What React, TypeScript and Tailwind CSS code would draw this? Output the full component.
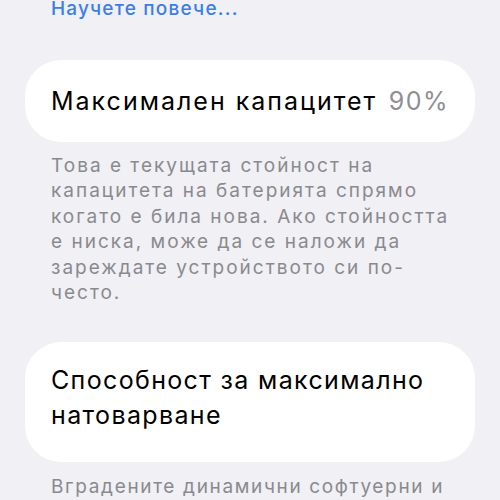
import React from "react";

export default function App() {
  return (
    <div
      lang="bg"
      className="w-[500px] h-[500px] overflow-hidden bg-[#f0f0f5] font-['Inter','Noto_Sans',sans-serif] antialiased"
    >
      <div className="-mt-[3px] pl-[51px] text-[19px] leading-[24px] font-medium tracking-[1.2px] text-[#3b7fe3] whitespace-nowrap">
        Научете повече...
      </div>

      <div className="mt-[39px] mx-[25px] h-[82px] rounded-[36px] bg-white flex items-center justify-between pl-[26px] pr-[26px]">
        <span className="text-[25px] leading-[30px] tracking-[2px] text-black whitespace-nowrap">
          Максимален капацитет
        </span>
        <span className="text-[25px] leading-[30px] tracking-[1.5px] text-[#8e8e93]">90%</span>
      </div>

      <p className="mt-[11px] pl-[51px] text-[19px] leading-[25.4px] tracking-[2px] text-[#8a8a8e] whitespace-nowrap">
        Това е текущата стойност на
        <br />
        капацитета на батерията спрямо
        <br />
        когато е била нова. Ако стойността
        <br />
        е ниска, може да се наложи да
        <br />
        зареждате устройството си по-
        <br />
        често.
      </p>

      <div className="mt-[37px] mx-[25px] rounded-[36px] bg-white pl-[26px] pr-[26px] pt-[21px] pb-[29px]">
        <div className="text-[25px] leading-[35px] tracking-[1.35px] text-black whitespace-nowrap">
          Способност за максимално
          <br />
          натоварване
        </div>
      </div>

      <p className="mt-[12px] pl-[51px] text-[19px] leading-[25px] tracking-[1.65px] text-[#8a8a8e] whitespace-nowrap">
        Вградените динамични софтуерни и
      </p>
    </div>
  );
}
